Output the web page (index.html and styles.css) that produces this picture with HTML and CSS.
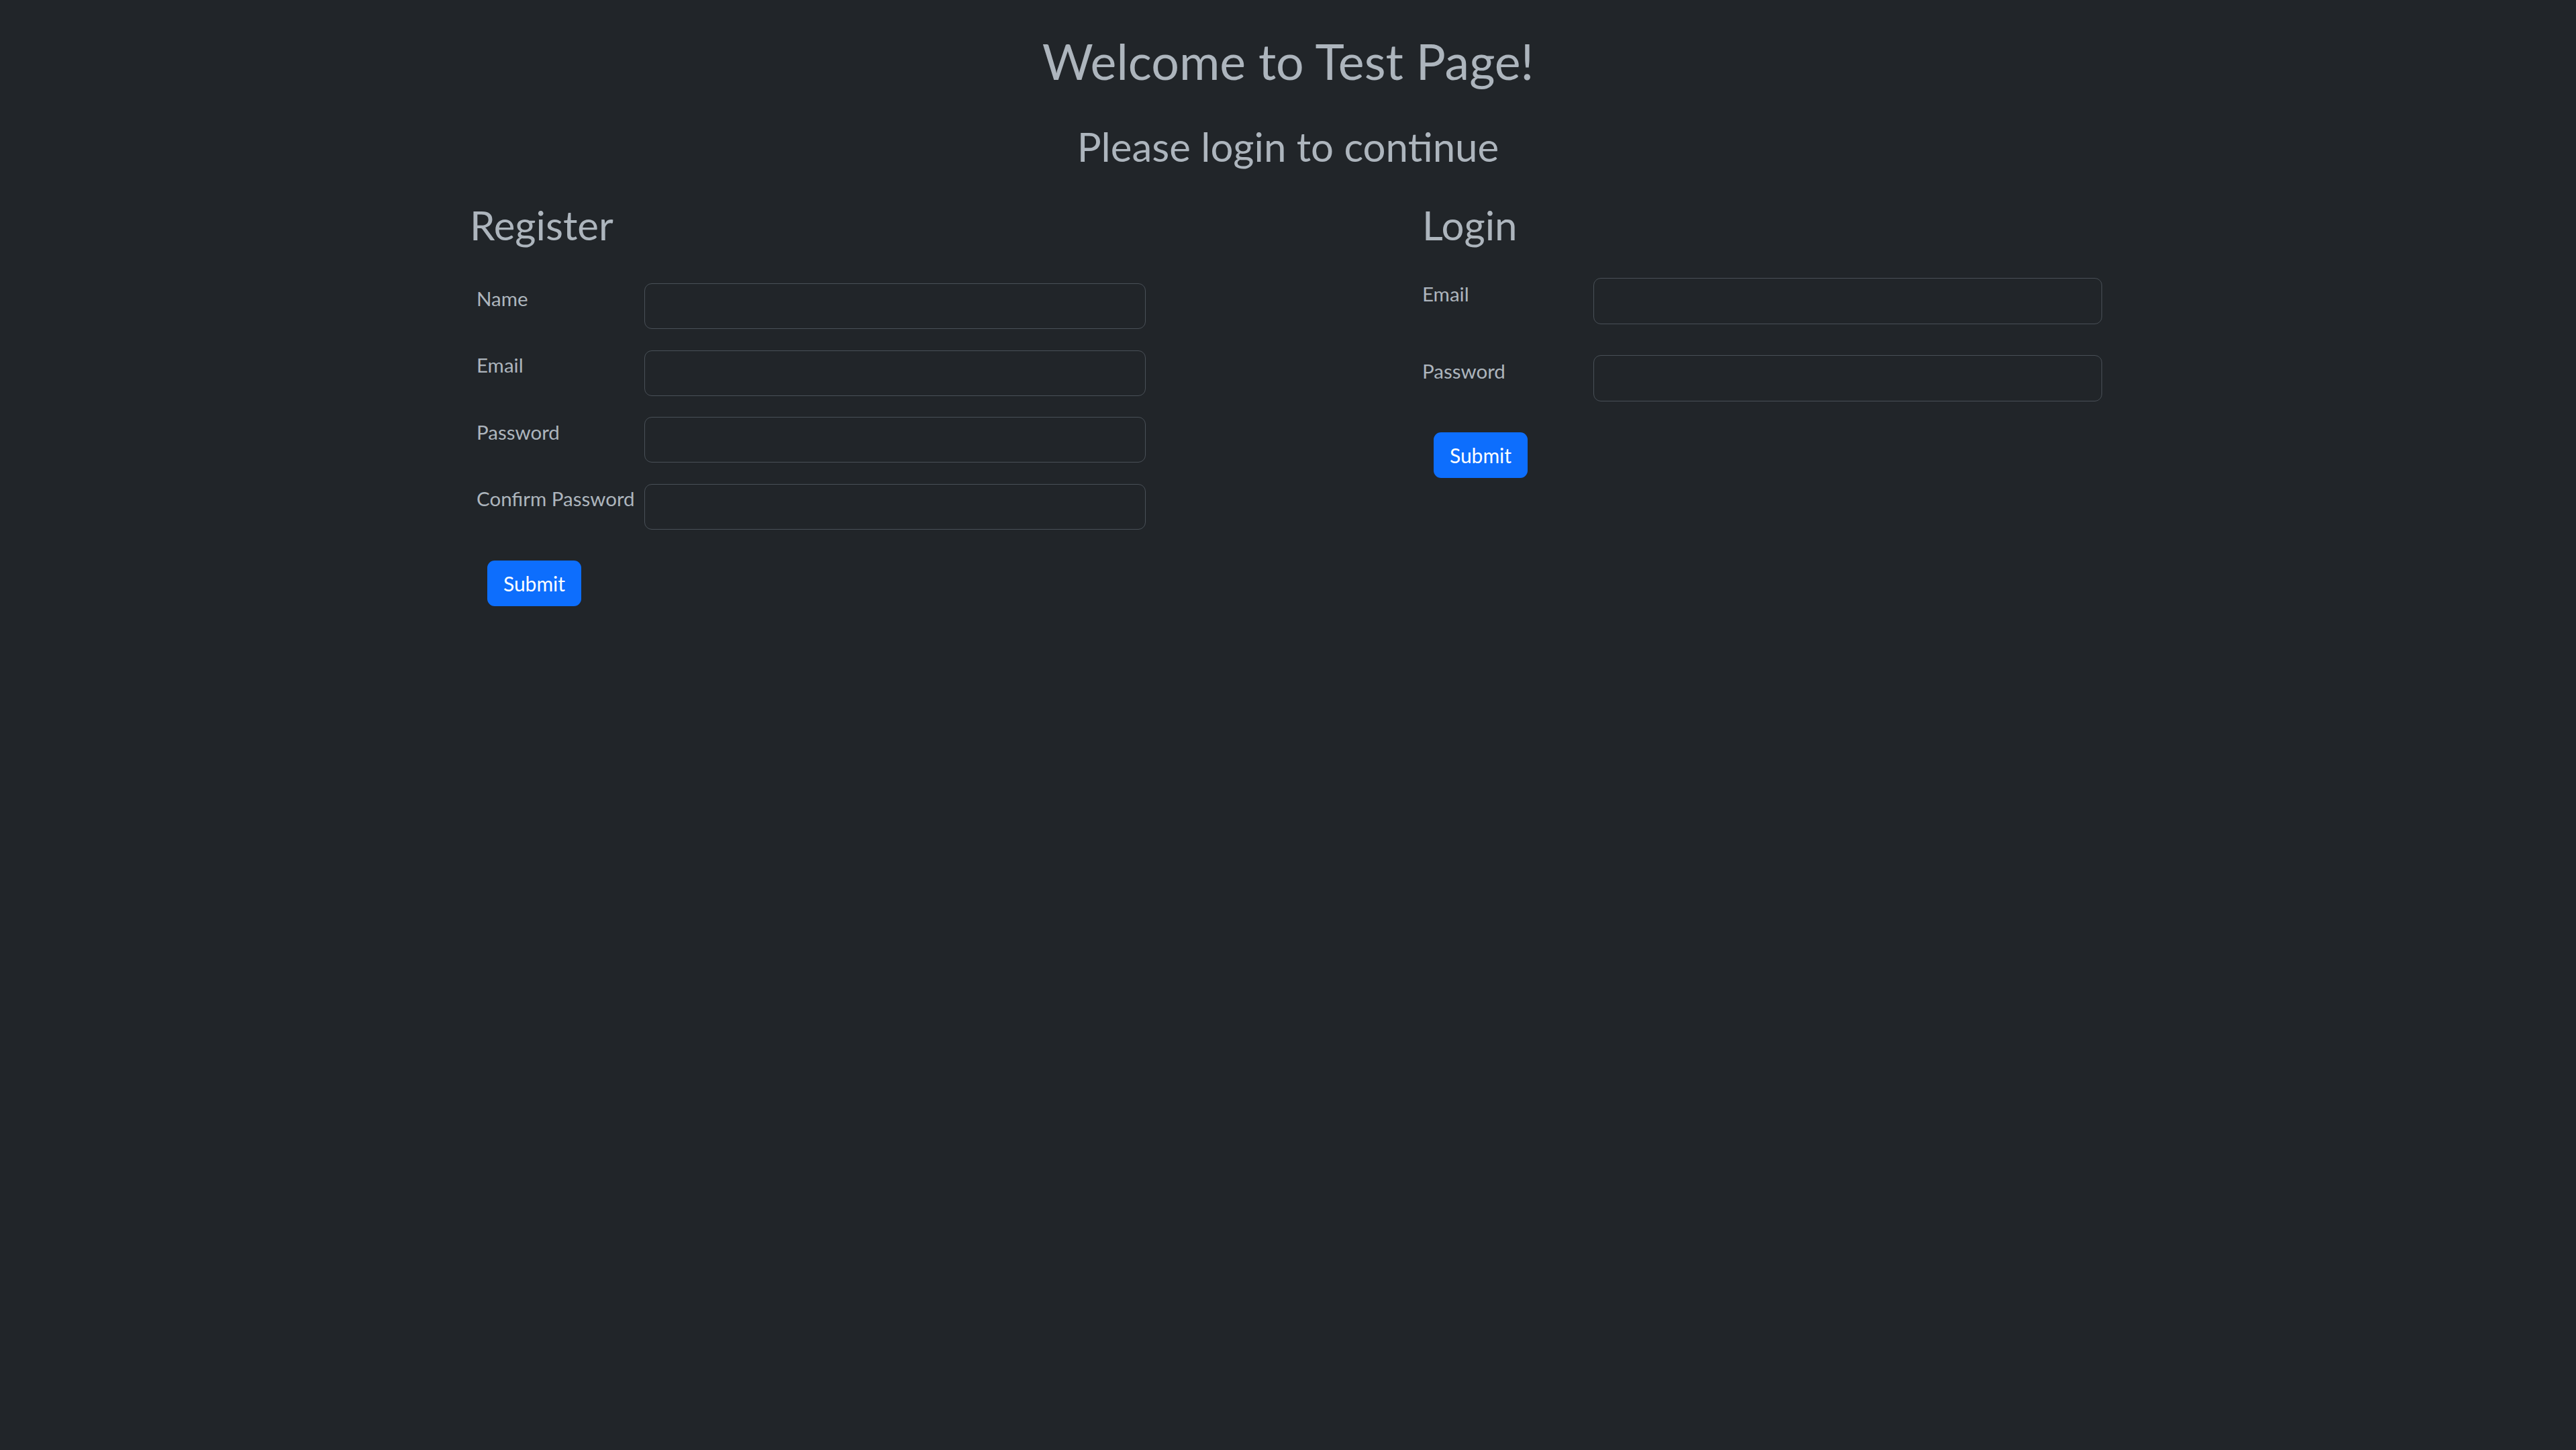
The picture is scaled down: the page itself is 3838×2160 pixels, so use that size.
FILE: index.html
```html
<!DOCTYPE html>
<html lang="en">
<head>
<meta charset="utf-8">
<title>Test Page</title>
<link rel="stylesheet" href="styles.css">
</head>
<body>
<main class="page">
  <header class="intro">
    <h1 class="title">Welcome to Test Page!</h1>
    <h2 class="subtitle">Please login to continue</h2>
  </header>
  <div class="columns">
    <section class="panel panel-register">
      <h2 class="panel-title">Register</h2>
      <form class="form form-register">
        <div class="row">
          <label class="label" for="r-name">Name</label>
          <input class="field" id="r-name" type="text">
        </div>
        <div class="row">
          <label class="label" for="r-email">Email</label>
          <input class="field" id="r-email" type="email">
        </div>
        <div class="row">
          <label class="label" for="r-pass">Password</label>
          <input class="field" id="r-pass" type="password">
        </div>
        <div class="row">
          <label class="label" for="r-confirm">Confirm Password</label>
          <input class="field" id="r-confirm" type="password">
        </div>
        <div class="actions">
          <button class="btn" type="button">Submit</button>
        </div>
      </form>
    </section>
    <section class="panel panel-login">
      <h2 class="panel-title">Login</h2>
      <form class="form form-login">
        <div class="row">
          <label class="label" for="l-email">Email</label>
          <input class="field" id="l-email" type="email">
        </div>
        <div class="row">
          <label class="label" for="l-pass">Password</label>
          <input class="field" id="l-pass" type="password">
        </div>
        <div class="actions">
          <button class="btn" type="button">Submit</button>
        </div>
      </form>
    </section>
  </div>
</main>
</body>
</html>
```
FILE: styles.css
```css
* { box-sizing: border-box; }

html, body {
  margin: 0;
  padding: 0;
  background: #212529;
}

body {
  color: #adb5bd;
  font-family: "Lato", "Open Sans", sans-serif;
  min-height: 2160px;
}

.page {
  width: 2438px;
  margin: 0 auto;
  padding: 47px 6px 0 0;
}

.intro {
  text-align: center;
  padding-left: 6px;
}

.title {
  margin: 0;
  font-size: 73.5px;
  font-weight: 400;
  line-height: 1.2;
}

.subtitle {
  margin: 46.5px 0 0;
  font-size: 60px;
  font-weight: 400;
  line-height: 1.2;
}

.columns {
  display: flex;
  justify-content: space-between;
  margin-top: 45px;
}

.panel-register { width: 1007px; }
.panel-login { width: 1013px; }

.panel-title {
  margin: 0;
  font-size: 60px;
  font-weight: 400;
  line-height: 1.2;
}

.form {
  display: flex;
  flex-direction: column;
}

.form-register {
  margin-top: 51.5px;
  padding-left: 10px;
  gap: 31.5px;
}

.form-login {
  margin-top: 43.5px;
  gap: 46px;
}

.row {
  display: flex;
  align-items: flex-start;
}

.label {
  font-size: 29.5px;
  line-height: 1.5;
  padding-top: 0.5px;
  white-space: nowrap;
}

.form-register .label { width: 250px; }
.form-login .label { width: 255px; padding-top: 1.5px; }

.field {
  flex: 1;
  height: 68px;
  background: #212529;
  border: 1px solid #495057;
  border-radius: 11px;
  color: #dee2e6;
  font: inherit;
  font-size: 29px;
  padding: 0 22px;
  outline: none;
}

.form-login .field { height: 69px; }

.actions {
  margin-top: 15px;
}

.form-register .actions { padding-left: 16px; }
.form-login .actions { padding-left: 17px; margin-top: 0; }

.btn {
  width: 140px;
  height: 68px;
  padding: 0;
  border: 0;
  border-radius: 11px;
  background: #0d6efd;
  color: #ffffff;
  font-family: "Lato", "Open Sans", sans-serif;
  font-size: 30px;
  line-height: 68px;
}
```
